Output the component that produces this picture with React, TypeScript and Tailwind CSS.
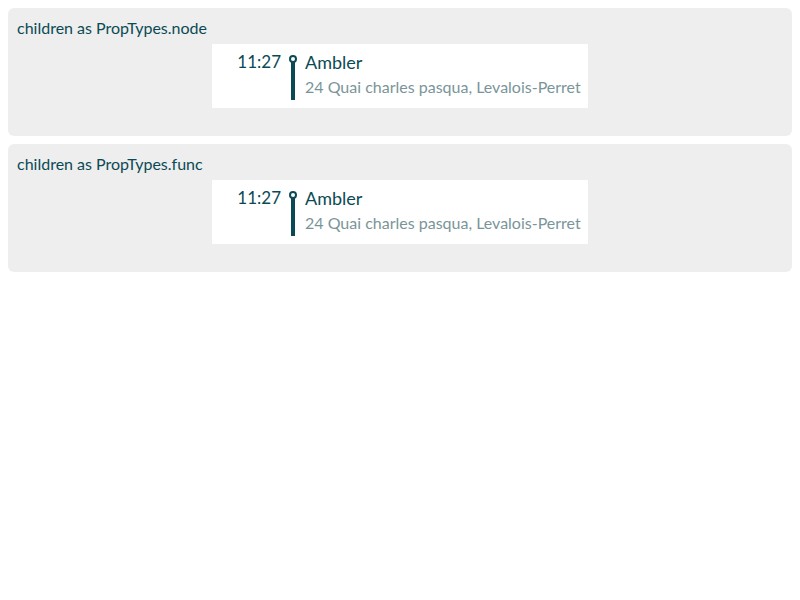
import React from "react";

function Stop() {
  return (
    <div className="mt-1 flex h-16 w-[376px] bg-white text-[#0b4a55]">
      <div className="w-[69px] pt-[6px] text-right text-[17px] leading-6">11:27</div>
      <div className="w-6 pt-[10px]">
        <svg width="24" height="46" viewBox="0 0 24 46">
          <circle cx="12" cy="5" r="3" fill="none" stroke="#0b4a55" strokeWidth="2" />
          <rect x="10" y="8" width="4" height="38" fill="#0b4a55" />
        </svg>
      </div>
      <div className="flex flex-col pt-[6px]">
        <div className="text-[18px] leading-6">Ambler</div>
        <div className="mt-[1px] text-[16px] leading-6 text-[#7a9599]">24 Quai charles pasqua, Levalois-Perret</div>
      </div>
    </div>
  );
}

function Panel({ title }: { title: string }) {
  return (
    <div className="flex h-32 flex-col rounded-md bg-[#eeeeee] px-[9px] pt-2">
      <div className="text-base leading-6 text-[#0b4a55]">{title}</div>
      <div className="flex justify-center">
        <Stop />
      </div>
    </div>
  );
}

export default function App() {
  return (
    <div className="flex flex-col gap-2 p-2" style={{ fontFamily: "Lato, 'Noto Sans', sans-serif" }}>
      <Panel title="children as PropTypes.node" />
      <Panel title="children as PropTypes.func" />
    </div>
  );
}
